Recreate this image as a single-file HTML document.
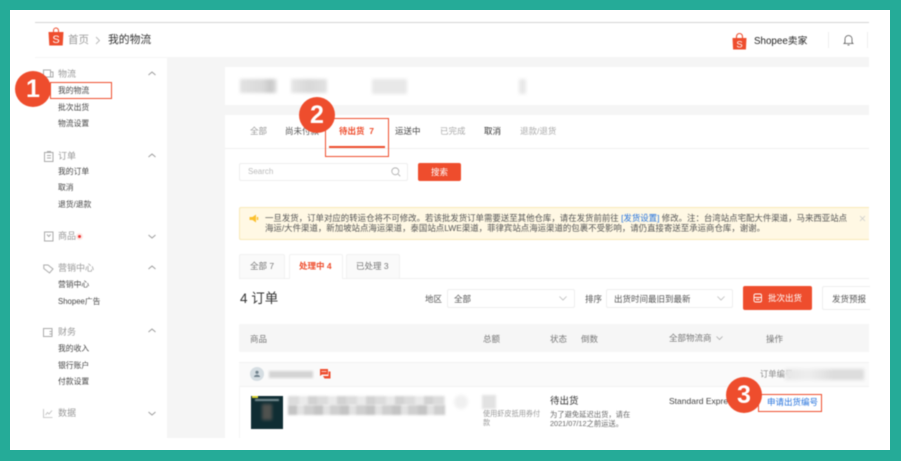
<!DOCTYPE html>
<html lang="zh"><head><meta charset="utf-8"><style>
html,body{margin:0;padding:0}
body{width:901px;height:461px;overflow:hidden;background:#25ab98;position:relative;font-family:"Liberation Sans","Noto Sans CJK SC",sans-serif}
#w{position:absolute;left:10px;top:10px;width:880px;height:440px;background:#fff}
#p{position:absolute;left:0;top:0;width:901px;height:461px;filter:blur(.5px)}
.a{position:absolute}
.t{position:absolute;white-space:nowrap;line-height:12px;height:12px}
.g{background:#f5f5f5}
.s{font-size:7.8px;color:#444}
.h{font-size:9px;color:#999}
.tab{font-size:8.5px;color:#999}
.d{font-size:8.5px;color:#555}
.red{background:#ee4d2d}
.box{position:absolute;border:1.5px solid #ee4d2d;box-sizing:border-box}
.c{position:absolute;border-radius:50%;background:#ee4d2d;color:#fff;font-weight:bold;font-size:25px;text-align:center;width:36px;height:36px;line-height:36px;font-family:"Liberation Sans",sans-serif}
.b{position:absolute;filter:blur(1.5px)}
svg{position:absolute;overflow:visible}
</style></head><body>
<div id="w"></div>
<div id="p">
<div class="a" style="left:35px;top:22px;width:834px;height:1px;background:#d4d4d4"></div>
<div class="a g" style="left:35px;top:57px;width:834px;height:381px"></div>
<div class="a" style="left:35px;top:58px;width:132px;height:380px;background:#fff"></div>

<svg style="left:48px;top:27px" width="16" height="20" viewBox="0 0 16 20"><path d="M5.500 5V3.500a2.500 2.500 0 0 1 5 0V5" fill="none" stroke="#ee4d2d" stroke-width="1"/><path d="M.5 5h15l-.8 13.500H1.300z" fill="#ee4d2d"/><text x="8" y="16" font-size="11" fill="#ffffff" text-anchor="middle" font-family="Liberation Sans">S</text></svg>
<div class="t" style="left:68px;top:34px;font-size:10.500px;color:#999">首页</div>
<svg style="left:95px;top:36px" width="6" height="9"><path d="M1 1l3.500 3.500L1 8" fill="none" stroke="#bbb"/></svg>
<div class="t" style="left:108px;top:34px;font-size:10.800px;color:#333">我的物流</div>

<svg style="left:732px;top:33px" width="15" height="17" viewBox="0 0 15 17"><path d="M4.500 5V3.500a3 3 0 0 1 6 0V5" fill="none" stroke="#ee4d2d" stroke-width="1.100"/><path d="M.5 5h14l-.6 11.500H1.100z" fill="#ee4d2d"/><text x="7.500" y="14.500" font-size="9.500" fill="#ffffff" text-anchor="middle" font-family="Liberation Sans">S</text></svg>
<div class="t" style="left:754px;top:36px;font-size:9.800px;color:#222">Shopee卖家</div>
<div class="a" style="left:828px;top:32px;width:1px;height:16px;background:#eee"></div>
<div class="a" style="left:867px;top:32px;width:1px;height:16px;background:#eee"></div>
<svg style="left:843px;top:34px" width="11" height="12"><path d="M2 8.500V5a3.500 3.500 0 0 1 7 0v3.500l1 1H1zM4.500 11h2" fill="none" stroke="#555" stroke-width=".8"/></svg>

<svg style="left:43px;top:69px" width="11" height="10"><path d="M.5 1h7v7h-7zM7.500 3h2.500v5H7.500" fill="none" stroke="#aaa"/></svg>
<div class="t h" style="left:58px;top:68px">物流</div>
<div class="t s" style="left:58px;top:85px">我的物流</div>
<div class="t s" style="left:58px;top:102px">批次出货</div>
<div class="t s" style="left:58px;top:118px">物流设置</div>
<svg style="left:44px;top:151px" width="10" height="11"><path d="M.5 1.500h8.500v9H.5zM3 4.500h4M3 7h4M3 .5h4" fill="none" stroke="#aaa"/></svg>
<div class="t h" style="left:58px;top:150px">订单</div>
<div class="t s" style="left:58px;top:166px">我的订单</div>
<div class="t s" style="left:58px;top:182px">取消</div>
<div class="t s" style="left:58px;top:199px">退货/退款</div>
<svg style="left:44px;top:231px" width="10" height="11"><path d="M.5 1h8.500v9H.5zM3 3.500l1.800 2 1.800-2" fill="none" stroke="#aaa"/></svg>
<div class="t h" style="left:58px;top:230px">商品</div>
<div class="a" style="left:78px;top:234.500px;width:3px;height:3px;border-radius:50%;background:#ee3030;box-shadow:0 0 0 2px #fde8e5"></div>
<svg style="left:43px;top:264px" width="11" height="10"><path d="M.8 1h4.200l5 4-3.500 4-5.700-4.500z" fill="none" stroke="#aaa"/></svg>
<div class="t h" style="left:58px;top:262px">营销中心</div>
<div class="t s" style="left:58px;top:279px">营销中心</div>
<div class="t s" style="left:58px;top:296px">Shopee广告</div>
<svg style="left:43px;top:328px" width="10" height="9"><path d="M.5.5h8.500v8H.5zM6.500 3.500h2.500v2.500H6.500" fill="none" stroke="#aaa"/></svg>
<div class="t h" style="left:58px;top:326px">财务</div>
<div class="t s" style="left:58px;top:343px">我的收入</div>
<div class="t s" style="left:58px;top:360px">银行账户</div>
<div class="t s" style="left:58px;top:376px">付款设置</div>
<svg style="left:43px;top:409px" width="10" height="9"><path d="M.5 0v8.500h9M2.500 6l2-2.500 1.500 1.500 3-3.500" fill="none" stroke="#bbb" stroke-width=".8"/></svg>
<div class="t h" style="left:58px;top:407px">数据</div>
<svg style="left:148px;top:71px" width="8" height="350"><g fill="none" stroke="#999" stroke-width=".9"><path d="M.5 4L4 1l3.500 3M.5 86L4 83l3.500 3M.5 164L4 167l3.500-3M.5 198L4 195l3.500 3M.5 261L4 258l3.500 3M.5 341L4 344l3.500-3"/></g></svg>

<div class="a" style="left:225px;top:67px;width:644px;height:38px;background:#fff"></div>
<div class="b" style="left:240px;top:79px;width:37px;height:14px;background:linear-gradient(90deg,#e2e2e2,#dadada 60%,#c8c8c8 85%,#e8e8e8)"></div>
<div class="b" style="left:291px;top:79px;width:36px;height:14px;background:linear-gradient(90deg,#e6e6e6,#d8d8d8 50%,#e2e2e2)"></div>
<div class="b" style="left:372px;top:79px;width:35px;height:15px;background:#e8e8e8"></div>
<div class="b" style="left:519px;top:79px;width:7px;height:15px;background:#e8e8e8"></div>

<div class="a" style="left:225px;top:115px;width:644px;height:323px;background:#fff"></div>
<div class="a" style="left:225px;top:148px;width:644px;height:1px;background:#f0f0f0"></div>
<div class="t tab" style="left:250px;top:125px">全部</div>
<div class="t tab" style="left:285px;top:125px;color:#555">尚未付款</div>
<div class="t tab" style="left:339px;top:125px;color:#ee4d2d;font-weight:bold">待出货&nbsp; 7</div>
<div class="t tab" style="left:395px;top:125px;color:#444">运送中</div>
<div class="t tab" style="left:440px;top:125px;color:#aaa">已完成</div>
<div class="t tab" style="left:484px;top:125px;color:#333">取消</div>
<div class="t tab" style="left:520px;top:125px;color:#aaa">退款/退货</div>
<div class="a red" style="left:329px;top:146px;width:56px;height:2px"></div>
<div class="box" style="left:325px;top:118px;width:64px;height:39px"></div>

<div class="a" style="left:239px;top:163px;width:169px;height:18px;border:1px solid #eee;box-sizing:border-box;border-radius:2px"></div>
<div class="t" style="left:248px;top:166px;font-size:8px;color:#bbb">Search</div>
<svg style="left:391px;top:167px" width="10" height="10"><circle cx="4.300" cy="4.300" r="3.500" fill="none" stroke="#aaa" stroke-width=".8"/><path d="M7 7l2.200 2.200" stroke="#aaa" stroke-width=".8"/></svg>
<div class="a red" style="left:418px;top:163px;width:43px;height:18px;border-radius:2px;color:#fff;font-size:8.500px;line-height:18px;text-align:center">搜索</div>

<div class="a" style="left:239px;top:207px;width:630px;height:33px;background:#fff8e4;border:1px solid #f8e9b8;border-right:0;box-sizing:border-box;border-radius:2px 0 0 2px"></div>
<svg style="left:249px;top:214px" width="11" height="9"><path d="M.5 3h3l3.500-2.500v8L3.500 6h-3z" fill="#fbc02d"/><path d="M8.500 3v3" stroke="#fbc02d" stroke-width="1.500"/></svg>
<div class="t" style="left:265px;top:212px;font-size:8.430px;color:#555">一旦发货，订单对应的转运仓将不可修改。若该批发货订单需要送至其他仓库，请在发货前前往 <span style="color:#2673dd">[发货设置]</span> 修改。注：台湾站点宅配大件渠道，马来西亚站点</div>
<div class="t" style="left:265px;top:222px;font-size:8.430px;color:#555">海运/大件渠道，新加坡站点海运渠道，泰国站点LWE渠道，菲律宾站点海运渠道的包裹不受影响，请仍直接寄送至承运商仓库，谢谢。</div>
<svg style="left:859px;top:215px" width="7" height="7"><path d="M1 1l5 5M6 1l-5 5" stroke="#ccc" stroke-width=".8"/></svg>

<div class="a" style="left:239px;top:278px;width:630px;height:1px;background:#f0f0f0"></div>
<div class="a" style="left:239px;top:254px;width:46px;height:24px;background:#fafafa;border:1px solid #f2f2f2;border-bottom:0;box-sizing:border-box;border-radius:2px 2px 0 0"></div>
<div class="a" style="left:289px;top:254px;width:54px;height:25px;background:#fff;border:1px solid #f2f2f2;border-bottom:0;box-sizing:border-box;border-radius:2px 2px 0 0"></div>
<div class="a" style="left:346px;top:254px;width:54px;height:24px;background:#fafafa;border:1px solid #f2f2f2;border-bottom:0;box-sizing:border-box;border-radius:2px 2px 0 0"></div>
<div class="t d" style="left:250px;top:260px;color:#777">全部 7</div>
<div class="t d" style="left:299px;top:260px;color:#ee4d2d;font-weight:bold">处理中 4</div>
<div class="t d" style="left:356px;top:260px;color:#777">已处理 3</div>

<div class="t" style="left:240px;top:292px;font-size:13.500px;line-height:14px;height:14px;color:#333">4 订单</div>
<div class="t d" style="left:425px;top:293px">地区</div>
<div class="a" style="left:447px;top:288.500px;width:128px;height:19px;border:1px solid #eee;box-sizing:border-box;border-radius:2px"></div>
<div class="t d" style="left:454px;top:293px">全部</div>
<svg style="left:559px;top:296px" width="8" height="5"><path d="M.5.5L4 4 7.500.5" fill="none" stroke="#bbb" stroke-width=".8"/></svg>
<div class="t d" style="left:585px;top:293px">排序</div>
<div class="a" style="left:606px;top:288.500px;width:127px;height:19px;border:1px solid #eee;box-sizing:border-box;border-radius:2px"></div>
<div class="t d" style="left:614px;top:293px">出货时间最旧到最新</div>
<svg style="left:717px;top:296px" width="8" height="5"><path d="M.5.5L4 4 7.500.5" fill="none" stroke="#bbb" stroke-width=".8"/></svg>
<div class="a red" style="left:743px;top:286px;width:69px;height:24px;border-radius:2px"></div>
<svg style="left:753px;top:293px" width="10" height="10"><path d="M1 2.500a1.500 1.500 0 0 1 1.500-1.500h4.500a1.500 1.500 0 0 1 1.500 1.500v5a1.500 1.500 0 0 1-1.500 1.500H2.500A1.500 1.500 0 0 1 1 7.500zM1 4.500h7.500M3 6.500h3.500" fill="none" stroke="#fff" stroke-width=".9"/></svg>
<div class="t d" style="left:768px;top:292px;color:#fff">批次出货</div>
<div class="a" style="left:822px;top:286px;width:48px;height:24px;border:1px solid #eee;border-right:0;box-sizing:border-box;border-radius:2px 0 0 2px"></div>
<div class="t d" style="left:832px;top:293px">发货预报</div>

<div class="a" style="left:239px;top:324px;width:630px;height:28px;background:#f6f6f6;border-radius:2px 0 0 2px"></div>
<div class="t d" style="left:250px;top:333px;color:#777">商品</div>
<div class="t d" style="left:483px;top:333px;color:#777">总额</div>
<div class="t d" style="left:550px;top:333px;color:#777">状态</div>
<div class="t d" style="left:581px;top:333px;color:#777">倒数</div>
<div class="t d" style="left:669px;top:332px;color:#777">全部物流商</div>
<svg style="left:716px;top:336px" width="7" height="5"><path d="M.5.500L3.500 3.500 6.500.500" fill="none" stroke="#aaa" stroke-width=".8"/></svg>
<div class="t d" style="left:766px;top:333px;color:#777">操作</div>

<div class="a" style="left:239px;top:362px;width:630px;height:24px;background:#fafafa;border-top:1px solid #f2f2f2;box-sizing:border-box"></div>
<div class="a" style="left:239px;top:386px;width:630px;height:1px;background:#f2f2f2"></div>
<div class="a" style="left:239px;top:386px;width:1px;height:52px;background:#f5f5f5"></div>
<div class="a" style="left:250px;top:367px;width:14px;height:14px;border-radius:50%;background:#d5dde2"></div>
<svg style="left:253px;top:370px" width="8" height="8"><circle cx="4" cy="2.300" r="1.600" fill="#73848f"/><path d="M1 7c0-3 6-3 6 0z" fill="#73848f"/></svg>
<div class="b" style="left:269px;top:371px;width:44px;height:7px;background:#d4d4d4;filter:blur(1px)"></div>
<svg style="left:320px;top:369px" width="11" height="10"><path d="M0 0h8v5.500H2L0 7z" fill="#ee4d2d"/><path d="M3 7h5.500V2.500H10.500V9.500H4.500z" fill="#ee4d2d"/><path d="M1.500 2.500h5" stroke="#fff" stroke-width=".7"/></svg>
<div class="t s" style="left:760px;top:368px;font-size:8.300px;color:#888">订单编号</div>
<div class="b" style="left:785px;top:369px;width:79px;height:11px;background:linear-gradient(90deg,#e6e6e6,#eee 30%,#ddd 60%,#ddd)"></div>

<div class="a" style="left:251px;top:396px;width:32px;height:33px;background:#0f2d33"></div>
<div class="a" style="left:252px;top:396px;width:6px;height:2px;background:#d8d030"></div>
<div class="a" style="left:262px;top:404px;width:10px;height:16px;background:#50524f;filter:blur(1.500px)"></div>
<div class="a" style="left:255px;top:399px;width:24px;height:2px;background:#7f959a;filter:blur(.5px)"></div>

<div class="b" style="left:288px;top:396px;width:157px;height:9px;background:repeating-linear-gradient(90deg,#dcdcdc 0 11px,#eaeaea 11px 20px,#d2d2d2 20px 29px);filter:blur(1px)"></div>
<div class="b" style="left:288px;top:405px;width:157px;height:10px;background:repeating-linear-gradient(90deg,#c4c4c4 0 9px,#e2e2e2 9px 16px,#cfcfcf 16px 26px);filter:blur(1px)"></div>
<div class="b" style="left:454px;top:395px;width:14px;height:14px;background:#f0f0f0;border-radius:50%"></div>
<div class="b" style="left:482px;top:395px;width:14px;height:14px;background:#e2e2e2;filter:blur(1px)"></div>
<div class="t" style="left:483px;top:408px;font-size:7.150px;color:#999">使用虾皮抵用券付</div>
<div class="t" style="left:483px;top:417px;font-size:7.150px;color:#999">款</div>
<div class="t" style="left:550px;top:396px;font-size:9.500px;color:#333">待出货</div>
<div class="t" style="left:550px;top:409px;font-size:7.300px;color:#666">为了避免延迟出货，请在</div>
<div class="t" style="left:550px;top:418px;font-size:7.300px;color:#666">2021/07/12之前运送。</div>
<div class="t" style="left:669px;top:395px;font-size:8.500px;color:#444">Standard Express</div>
<div class="t" style="left:767px;top:396px;font-size:8.500px;color:#2673dd">申请出货编号</div>
<div class="box" style="left:758px;top:394px;width:64px;height:18px"></div>

<div class="box" style="left:50px;top:82px;width:62px;height:17px"></div>
<div class="c" style="left:15px;top:71px">1</div>
<div class="c" style="left:299px;top:97px">2</div>
<div class="c" style="left:726px;top:377px">3</div>
</div>
</body></html>
